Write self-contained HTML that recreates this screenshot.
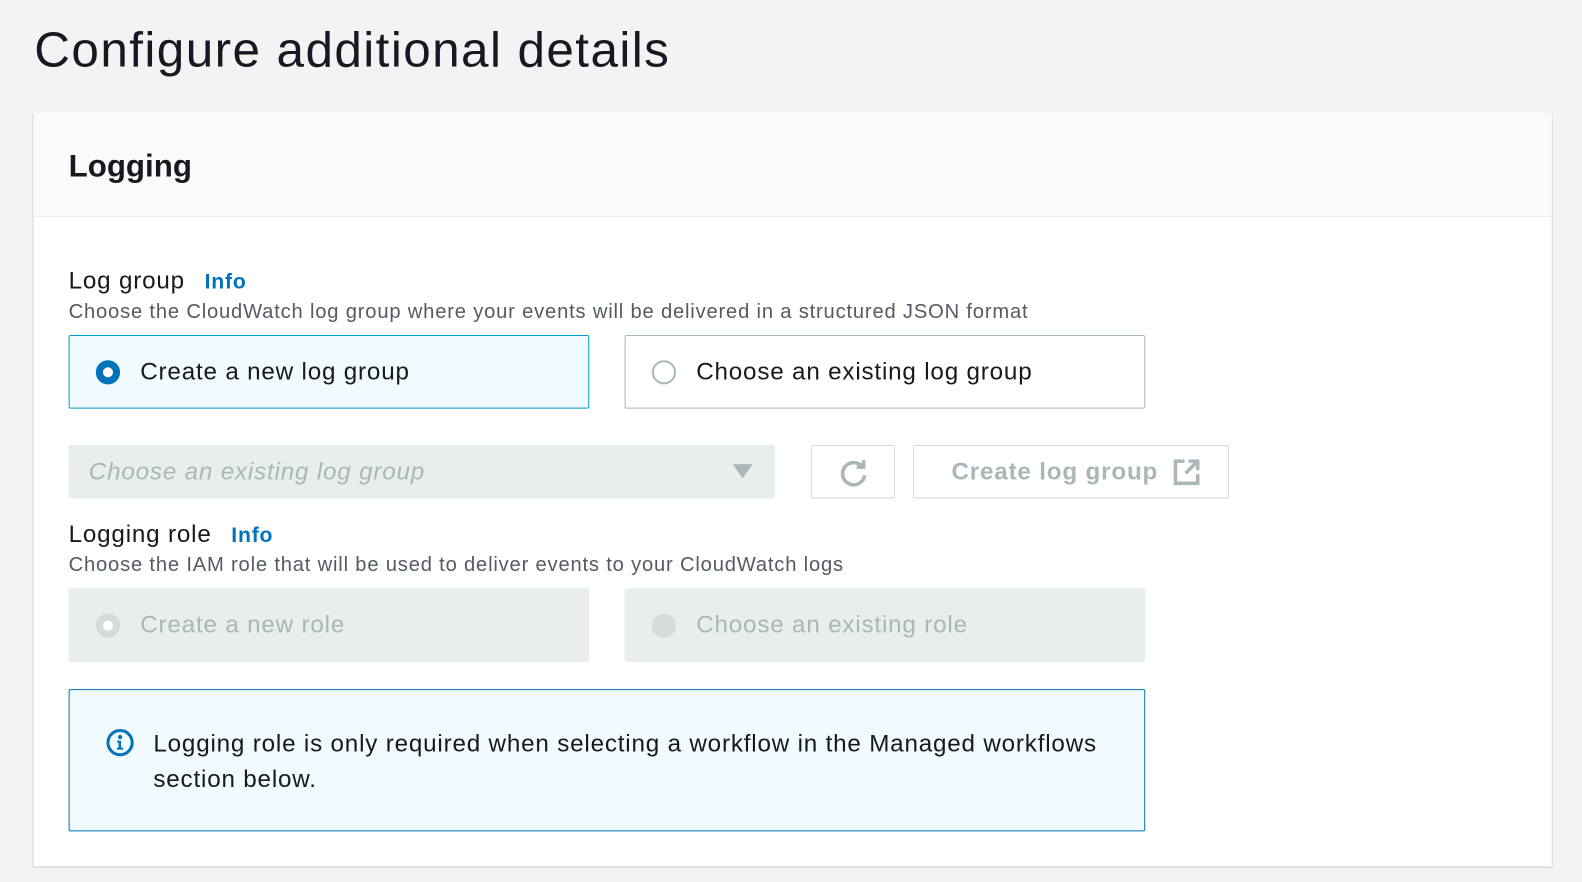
<!DOCTYPE html>
<html><head><meta charset="utf-8"><style>
*{box-sizing:border-box;margin:0;padding:0}
body{width:1582px;height:882px;background:#f2f3f3;font-family:"Liberation Sans",sans-serif;color:#16191f;overflow:hidden;letter-spacing:0.8px}
#w{position:relative;width:1568px;height:874px;transform:scale(1.009);transform-origin:0 0}
.a{position:absolute;white-space:nowrap}
.card{position:absolute;left:33px;top:112px;width:1505px;height:747px;background:#fff;box-shadow:0 1px 1px rgba(0,28,36,.3),1px 1px 1px rgba(0,28,36,.15),-1px 1px 1px rgba(0,28,36,.15)}
.hdr{position:absolute;left:0;top:0;width:100%;height:103px;background:#fafafa;border-bottom:1px solid #eaeded}
.tile{position:absolute;height:73px;width:516px;border:1px solid #aab7b8;border-radius:2px;font-size:24px;line-height:71px;padding-left:70px}
.rad{position:absolute;left:26px;top:24px;width:24px;height:24px;border-radius:50%}
.info{color:#0073bb;font-weight:bold;font-size:21px}
.desc{font-size:20px;color:#545b64}
</style></head><body><div id="w">
<div class="a" style="left:34px;top:20px;font-size:49px;line-height:60px;letter-spacing:1.4px">Configure additional details</div>
<div class="card">
<div class="hdr"><div class="a" style="left:35px;top:35px;font-size:31px;font-weight:bold;letter-spacing:0">Logging</div></div>
<div class="a" style="left:35px;top:153px;font-size:24px">Log group <span class="info" style="margin-left:12px">Info</span></div>
<div class="a desc" style="left:35px;top:186px">Choose the CloudWatch log group where your events will be delivered in a structured JSON format</div>
<div class="tile" style="left:35px;top:220px;background:#f1faff;border-color:#00a1c9">
<div class="rad" style="border:7px solid #0073bb;background:#fff"></div>Create a new log group</div>
<div class="tile" style="left:586px;top:220px"><div class="rad" style="border:2px solid #aab7b8"></div>Choose an existing log group</div>
<div class="a" style="left:35px;top:329px;width:700px;height:53px;background:#eaeded;border-radius:2px;font-size:24px;font-style:italic;color:#aab7b8;line-height:53px;padding-left:20px">Choose an existing log group
<svg style="position:absolute;right:22px;top:19px" width="20" height="14"><path d="M0 0h20L10 14z" fill="#aab7b8"/></svg></div>
<div class="a" style="left:771px;top:329px;width:83px;height:53px;border:1px solid #d5dbdb;border-radius:2px">
<svg style="position:absolute;left:26px;top:12px" width="30" height="30" viewBox="0 0 30 30"><path d="M24 9A11 11 0 1 0 26 17" fill="none" stroke="#aab7b8" stroke-width="3.5"/><path d="M18 9h7V2" fill="none" stroke="#aab7b8" stroke-width="3.5"/></svg></div>
<div class="a" style="left:872px;top:329px;width:313px;height:53px;border:1px solid #d5dbdb;border-radius:2px;font-size:24px;font-weight:bold;color:#aab7b8;line-height:51px;padding-left:37px">Create log group
<svg style="position:absolute;left:257px;top:13px" width="26" height="26" viewBox="0 0 26 26"><path d="M11 2H2v22h22v-9M15 2h9v9M24 2L12 14" fill="none" stroke="#aab7b8" stroke-width="3.5"/></svg></div>
<div class="a" style="left:35px;top:404px;font-size:24px">Logging role <span class="info" style="margin-left:12px">Info</span></div>
<div class="a desc" style="left:35px;top:437px">Choose the IAM role that will be used to deliver events to your CloudWatch logs</div>
<div class="tile" style="left:35px;top:471px;background:#eaeded;border-color:#eaeded;color:#aab7b8"><div class="rad" style="border:7px solid #d5dbdb;background:#fff"></div>Create a new role</div>
<div class="tile" style="left:586px;top:471px;background:#eaeded;border-color:#eaeded;color:#aab7b8"><div class="rad" style="background:#d5dbdb"></div>Choose an existing role</div>
<div class="a" style="left:35px;top:571px;width:1067px;height:141px;border:1px solid #0073bb;border-radius:2px;background:#f1faff;font-size:24px;line-height:35px;padding:36px 30px 0 83px;white-space:normal">
<svg style="position:absolute;left:36px;top:38px" width="28" height="28" viewBox="0 0 28 28"><circle cx="14" cy="14" r="12" fill="none" stroke="#0073bb" stroke-width="3"/><circle cx="14" cy="8.5" r="2" fill="#0073bb"/><path d="M11 12h4v7h2v2h-6v-2h1.5v-5H11z" fill="#0073bb"/></svg>
Logging role is only required when selecting a workflow in the Managed workflows section below.</div>
</div>
</div></body></html>
